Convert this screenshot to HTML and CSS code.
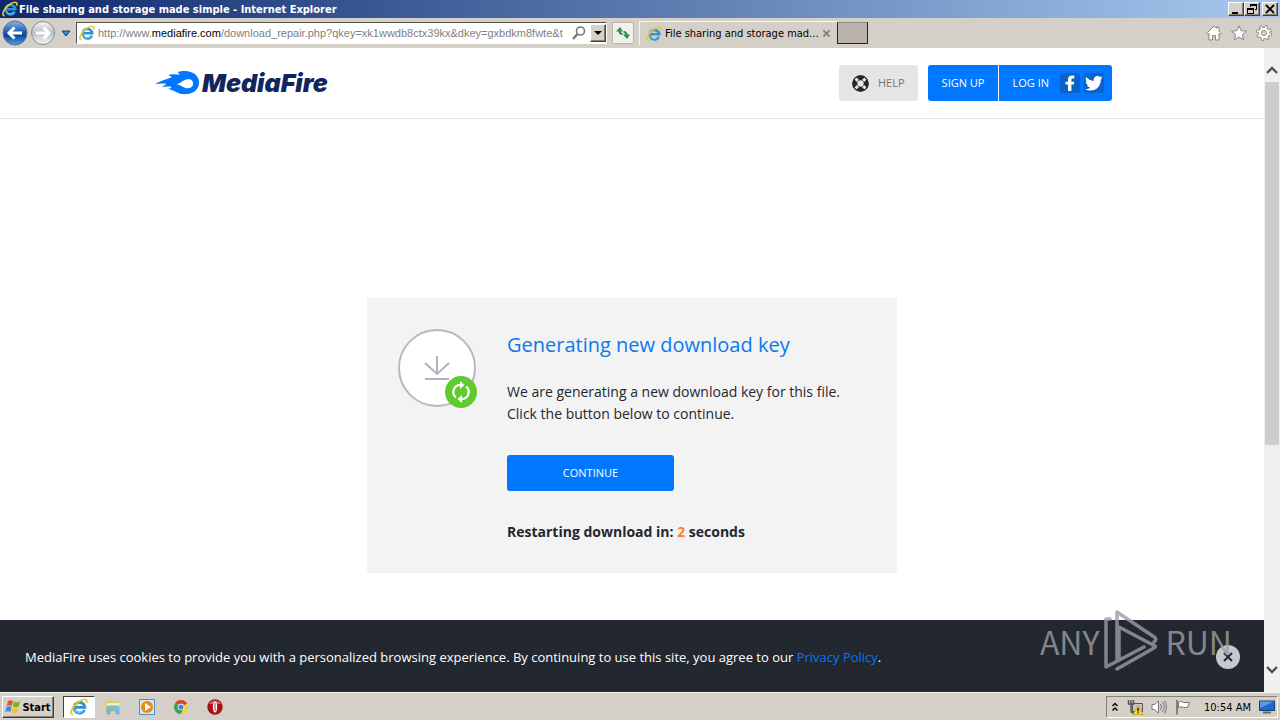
FILE: index.html
```html
<!DOCTYPE html>
<html lang="en">
<head>
<meta charset="utf-8">
<title>File sharing and storage made simple</title>
<link rel="stylesheet" href="styles.css">
</head>
<body>
<svg class="defs" aria-hidden="true">
  <symbol id="ie" viewBox="0 0 16 16">
    <path d="M12.800 10.600A4.800 4.800 0 1 1 13.200 8.300H5" fill="none" stroke="#2b93da" stroke-width="2.600"/>
    <path d="M12 10.800A4.600 4.600 0 0 1 4 10" fill="none" stroke="#7fd0f6" stroke-width="1"/>
    <path d="M2.600 14.800C-1.200 14.200 2 7.500 7 3.800 11.500 .3 16.200 .2 14.600 4.600" fill="none" stroke="#f2c62c" stroke-width="1.700"/>
  </symbol>
</svg>

<header class="titlebar">
  <svg class="icon16"><use href="#ie"/></svg>
  <span class="titlebar-text">File sharing and storage made simple - Internet Explorer</span>
  <div class="window-buttons">
    <button class="bevel" aria-label="Minimize"><svg viewBox="0 0 14 12"><path d="M3 9h6v2H3z"/></svg></button>
    <button class="bevel" aria-label="Restore"><svg viewBox="0 0 14 12"><path d="M5 1h7v6h-2V6h1V3H6v1H5zM2 5h7v6H2zm1 2v3h5V7z" fill-rule="evenodd"/></svg></button>
    <button class="bevel close" aria-label="Close"><svg viewBox="0 0 14 12"><path d="M3 2l8 8M11 2l-8 8" stroke="#000" stroke-width="1.800"/></svg></button>
  </div>
</header>

<nav class="toolbar">
  <div class="history">
    <button class="plain" aria-label="Back"><svg class="nav-icon" viewBox="0 0 26 26">
      <defs><linearGradient id="blue" x2="0" y2="1"><stop stop-color="#8db6e5"/><stop offset=".45" stop-color="#1d5db0"/><stop offset=".6" stop-color="#08479c"/><stop offset="1" stop-color="#4ba5e8"/></linearGradient></defs>
      <circle cx="13" cy="13" r="12" fill="url(#blue)" stroke="#5b6f8f"/><path d="M20 13H7M12.500 7.500L7 13l5.500 5.500" fill="none" stroke="#fff" stroke-width="3"/></svg></button>
    <button class="plain" aria-label="Forward"><svg class="nav-icon" viewBox="0 0 26 26">
      <defs><linearGradient id="grey" x2="0" y2="1"><stop stop-color="#f4f4f4"/><stop offset=".5" stop-color="#b8c0c8"/><stop offset="1" stop-color="#f4f8fb"/></linearGradient></defs>
      <circle cx="13" cy="13" r="11.500" fill="url(#grey)" stroke="#858c94"/><path d="M6 13h13M13.500 7.500L19 13l-5.500 5.500" fill="none" stroke="#fff" stroke-width="3"/></svg></button>
    <button class="plain recent" aria-label="Recent pages"><svg viewBox="0 0 10 7"><path d="M1 1h8L5 6z" fill="#2f8fd0" stroke="#123f78"/></svg></button>
  </div>
  <div class="address">
    <svg class="icon16"><use href="#ie"/></svg>
    <a class="url" href="#">http://www.<span class="domain">mediafire.com</span>/download_repair.php?qkey=xk1wwdb8ctx39kx&amp;dkey=gxbdkm8fwte&amp;t</a>
    <button class="plain" aria-label="Search"><svg class="icon16" viewBox="0 0 16 16"><circle cx="9.500" cy="6" r="4" fill="none" stroke="#777" stroke-width="1.600"/><path d="M6.500 9L2 14" stroke="#777" stroke-width="2.400"/></svg></button>
    <button class="bevel drop" aria-label="Show addresses"><svg viewBox="0 0 14 12"><path d="M3 4h8L7 8z"/></svg></button>
  </div>
  <button class="refresh" aria-label="Refresh"><svg class="icon16" viewBox="0 0 16 16"><path d="M1 6.500l4-4.500 3 4.500zM8 9.500h7L12 14z" fill="#259044"/><path d="M4.500 6q0 3 3 3M11.500 10q0-3-3-3" fill="none" stroke="#259044" stroke-width="2"/></svg></button>
  <div class="tab">
    <svg class="icon16"><use href="#ie"/></svg>
    <span class="tab-title">File sharing and storage mad...</span>
    <button class="plain" aria-label="Close tab"><svg class="tab-x" viewBox="0 0 10 10"><path d="M1.500 1.500l7 7M8.500 1.500l-7 7" stroke="#888178" stroke-width="2"/></svg></button>
  </div>
  <button class="new-tab" aria-label="New tab"></button>
  <div class="tools">
    <button class="plain" aria-label="Home"><svg class="icon16" viewBox="0 0 16 16"><path d="M8 1l2.500 2.500V2H13v4l2.500 2.500-1 1L13 8.500V15H9.500v-4.500h-3V15H3V8.500L1.500 9.500l-1-1z" fill="#fff" stroke="#858585"/></svg></button>
    <button class="plain" aria-label="Favorites"><svg class="icon16" viewBox="0 0 16 16"><path d="M8 .8l2.100 4.900 5.300.4-4 3.500 1.200 5.300L8 12.100l-4.600 2.800 1.200-5.300-4-3.500 5.300-.4z" fill="#fff" stroke="#858585"/></svg></button>
    <button class="plain" aria-label="Tools"><svg class="icon16" viewBox="0 0 16 16"><circle cx="8" cy="8" r="6.300" fill="none" stroke="#858585" stroke-width="3.400" stroke-dasharray="2.600 2.350"/><circle cx="8" cy="8" r="4.200" fill="none" stroke="#858585" stroke-width="4"/><circle cx="8" cy="8" r="6" fill="none" stroke="#fff" stroke-width="2.200" stroke-dasharray="1.600 3.110" stroke-dashoffset="-.5"/><circle cx="8" cy="8" r="4.100" fill="none" stroke="#fff" stroke-width="2.400"/></svg></button>
  </div>
</nav>

<div class="viewport">
  <div class="page">
    <header class="site-header">
      <a class="logo" href="#">
        <svg class="flame" viewBox="0 0 46 26"><path d="M0 14C5 10.500 12 9.500 17 7c-1-1.500-3-2-4-2C18 3 22 4.500 25 4.200c0-1.200-1-1.700-2-2C26-.2 43-1 45 11c1 10-9 15-19 13-5-1.500-8-4-13-5 2-.2 3-1 4-2-3-1-7 0-10 .4 2-1.400 3-2.700 5-3.400-4-1-8-.3-12 0z" fill="#07f"/><path d="M22 14c4 0 6-3.500 10-4.500 4-1 7 .5 7 4 0 4-4 5.500-8 4.500-3-.8-5-3-9-4z" fill="#fff"/></svg>
        <span>MediaFire</span>
      </a>
      <div class="account">
        <a class="btn help" href="#">
          <svg class="help-icon" viewBox="0 0 16 16"><circle cx="8" cy="8" r="5.300" fill="none" stroke="#262626" stroke-width="4.600"/><path d="M3 3l2.500 2.500M13 3l-2.500 2.500M3 13l2.500-2.500M13 13l-2.500-2.500" stroke="#e5e5e5" stroke-width="2.800"/><circle cx="8" cy="8" r="7.300" fill="none" stroke="#262626"/></svg>
          HELP</a>
        <div class="join">
          <a class="btn signup" href="#">SIGN UP</a>
          <a class="btn login" href="#">LOG IN
            <span class="socials">
              <svg class="social" viewBox="0 0 20 20"><rect width="20" height="20" rx="2" fill="#0862c8"/><path d="M8 18v-6.500H5.500V8.700H8V6.800C8 4 9.500 2.500 12 2.500h2.300v2.900H13c-1.300 0-1.600.5-1.600 1.600v1.700h2.900l-.4 2.800h-2.500V18z" fill="#fff"/></svg>
              <svg class="social" viewBox="0 0 20 20"><rect width="20" height="20" rx="2" fill="#0862c8"/><path d="M18.500 4.500l-1.700 2.200C16.800 13 12.500 17.500 7 17.500c-2.200 0-4.200-.6-5.800-1.600 2 .2 3.700-.4 5.100-1.500-1.600-.1-2.900-1.100-3.300-2.500h1.400C2.700 11.600 1.700 10.300 1.700 8.600l1.500.4C1.600 8 1.200 5.700 2.200 4c2 2.300 4.600 3.700 7.500 3.900C9.200 5.200 11 3 13.400 3c1.100 0 2 .4 2.700 1.100l2.200-.8-1.300 1.900z" fill="#fff"/></svg>
            </span>
          </a>
        </div>
      </div>
    </header>

    <main class="main">
      <section class="card">
        <svg class="status" viewBox="0 0 80 80">
          <circle cx="39" cy="39" r="38" fill="#fff" stroke="#b6b8c6" stroke-width="2"/>
          <path d="M39 27v18M27 34l12 11 12-11M27 50h24" fill="none" stroke="#b0b2be" stroke-width="2"/>
          <circle cx="63" cy="63" r="16" fill="#5fcb2e"/>
          <path d="M58 68.500A7 7 0 0 1 62.500 56M68 57.500A7 7 0 0 1 63.500 70" fill="none" stroke="#fff" stroke-width="2.200"/>
          <path d="M62 52l4.500 4-4.500 4zM64 74l-4.500-4 4.500-4z" fill="#fff"/>
        </svg>
        <div class="card-body">
          <h1>Generating new download key</h1>
          <p>We are generating a new download key for this file.<br>Click the button below to continue.</p>
          <button class="continue">CONTINUE</button>
          <p class="countdown">Restarting download in: <span>2</span> seconds</p>
        </div>
      </section>
    </main>

    <footer class="cookies">
      <p>MediaFire uses cookies to provide you with a personalized browsing experience. By continuing to use this site, you agree to our <a href="#">Privacy Policy</a>.</p>
      <button class="dismiss" aria-label="Dismiss"><svg viewBox="0 0 10 10"><path d="M1 1l8 8M9 1L1 9" stroke="#23272f" stroke-width="2"/></svg></button>
    </footer>
    <div class="watermark">
      <span>ANY</span>
      <svg viewBox="0 0 56 64"><path d="M13 50V3l38 25.500q2 2-1 4.500M6 10H2v48l38-20M13 50l2-1V18l36 19q1 1-1 2L13 60" fill="none" stroke="#9b9da1" stroke-width="3.500" stroke-linejoin="round" stroke-linecap="round"/></svg>
      <span>RUN</span>
    </div>
  </div>
  <div class="scrollbar" aria-hidden="true">
    <svg class="arrow" viewBox="0 0 12 8"><path d="M1 7l5-5 5 5" fill="none" stroke="#505050" stroke-width="2.400"/></svg>
    <div class="track"><div class="thumb"></div></div>
    <svg class="arrow" viewBox="0 0 12 8"><path d="M1 1l5 5 5-5" fill="none" stroke="#505050" stroke-width="2.400"/></svg>
  </div>
</div>

<footer class="taskbar">
  <button class="bevel start"><svg class="icon16" viewBox="0 0 16 16"><path d="M3 2q2.500-1.500 5 0L6.800 7q-2.500-1.300-5 0z" fill="#e8542b"/><path d="M9 2.400q2.500 1.500 6 0L13.700 7.500q-3 1.400-5.900 0z" fill="#76b52b"/><path d="M1.500 8q2.500-1.400 5 0l-1.200 5q-2.500-1.400-5 0z" fill="#3b8de0"/><path d="M7.500 8.500q3 1.400 6 0l-1.300 5q-3 1.400-5.900 0z" fill="#f6c32a"/></svg>Start</button>
  <button class="task active" aria-label="Internet Explorer"><svg class="icon18"><use href="#ie"/></svg></button>
  <button class="task" aria-label="Explorer"><svg class="icon16" viewBox="0 0 16 16"><path d="M1 3l2-1.500h4l1 1.500h6v10H1z" fill="#e2c860"/><path d="M2 4h12v4H2z" fill="#fbf0ab"/><path d="M2 15V9q0-2 2-2h8q2 0 2 2v6h-3v-4H5v4z" fill="#75c1e5" stroke="#4a98c0" stroke-width=".5"/></svg></button>
  <button class="task" aria-label="Media Player"><svg class="icon16" viewBox="0 0 16 16"><path d="M.5.500h15v15H.5z" fill="#d1e8fa" stroke="#4c91cb"/><circle cx="8" cy="8" r="6" fill="#f28614"/><path d="M6 4l6 4-6 4z" fill="#fff"/></svg></button>
  <button class="task" aria-label="Chrome"><svg class="icon14" viewBox="0 0 16 16"><circle cx="8" cy="8" r="8" fill="#f8cf36"/><path d="M8 8L1.200 3.800A8 8 0 0 1 15 4z" fill="#da4435"/><path d="M8 8L1.200 3.800A8 8 0 0 0 7.500 16l4-7z" fill="#35a354"/><circle cx="8" cy="8" r="3.800" fill="#fff"/><circle cx="8" cy="8" r="3" fill="#4384e6"/></svg></button>
  <button class="task" aria-label="Opera"><svg class="icon16" viewBox="0 0 16 16"><circle cx="8" cy="8" r="7.700" fill="#a90f18"/><path d="M2 5a7 7 0 0 1 12 0z" fill="#d56468"/><ellipse cx="8" cy="8" rx="2.200" ry="5.500" fill="#fff"/><path d="M8 4v8" stroke="#8e0912" stroke-width=".8"/></svg></button>
  <div class="tray">
    <button class="plain" aria-label="Show hidden icons"><svg class="chev" viewBox="0 0 8 10"><path d="M1.500 4L4 1.500 6.500 4M1.500 8.500L4 6l2.500 2.500" fill="none" stroke="#000" stroke-width="1.400"/></svg></button>
    <svg class="icon16" viewBox="0 0 16 16"><path d="M5.500 4.500h10v8h-10z" fill="#c3c3c3" stroke="#555"/><path d="M1.500 1v4h5V1M4 1v11q0 2 3 2" fill="none" stroke="#555" stroke-width="1.500"/><path d="M11 6.500l5 9H6z" fill="#ffda20" stroke="#b28b00" stroke-width=".6"/><path d="M11 9v3.500m0 .8v1" stroke="#000" stroke-width="1.300"/></svg>
    <svg class="icon16" viewBox="0 0 16 16"><path d="M1 5.500h2.500L7.500 2v12l-4-3.500H1z" fill="#fff" stroke="#777"/><path d="M9.500 5q2 3 0 6M11.500 3q3.500 5 0 10M13.500 1.500q4 6.500 0 13" fill="none" stroke="#777"/></svg>
    <svg class="icon16" viewBox="0 0 16 16"><path d="M3.500 3q3-1.500 5.500.5h5.500l-2 5H8.500Q6 7 3.500 8.500z" fill="#fff" stroke="#777"/><path d="M2 1v14.500" stroke="#777" stroke-width="1.800"/></svg>
    <time>10:54 AM</time>
    <svg class="icon16" viewBox="0 0 16 16"><path d="M.5 2h15v9.500H.5z" fill="#1d69cb" stroke="#173d76"/><path d="M1 2.500h14L1 9z" fill="#5799e5"/><path d="M4 13.500h8" stroke="#666" stroke-width="2"/></svg>
  </div>
</footer>
</body>
</html>
```
FILE: styles.css
```css
* { box-sizing: border-box; }
body {
  margin: 0;
  min-height: 100vh;
  display: flex;
  flex-direction: column;
  background: #fff;
  color: #23272f;
  font-family: "Open Sans", sans-serif;
}
.defs { position: absolute; width: 0; height: 0; }
button { margin: 0; padding: 0; font: inherit; color: inherit; }
a { text-decoration: none; color: inherit; }
p, h1 { margin: 0; }
svg { display: block; flex: none; }
.icon14 { width: 14px; height: 14px; }
.icon16 { width: 16px; height: 16px; }
.icon18 { width: 18px; height: 18px; }
.plain { border: 0; background: none; display: flex; align-items: center; }
.bevel {
  display: flex;
  align-items: center;
  justify-content: center;
  background: #d6d1c8;
  border: 1px solid;
  border-color: #fff #404040 #404040 #fff;
  box-shadow: inset -1px -1px #858078;
}

.titlebar, .toolbar, .taskbar { font-family: "DejaVu Sans Condensed", "DejaVu Sans", sans-serif; }
.titlebar {
  height: 18px;
  display: flex;
  align-items: center;
  padding: 0 2px;
  gap: 1px;
  background: linear-gradient(90deg, #0d286c, #a6caf0);
  color: #fff;
  font-size: 11px;
  font-weight: bold;
}
.titlebar-text { flex: 1; white-space: nowrap; }
.window-buttons { display: flex; }
.window-buttons .bevel { width: 16px; height: 14px; }
.window-buttons svg { width: 14px; height: 12px; }
.window-buttons .close { margin-left: 2px; }

.toolbar {
  height: 30px;
  display: flex;
  align-items: center;
  padding: 0 8px 0 2px;
  background: #d5d0c7;
  font-size: 11px;
  color: #000;
}
.history { display: flex; align-items: center; gap: 2px; width: 74px; }
.nav-icon { width: 26px; height: 26px; }
.recent { margin-left: 3px; }
.recent svg { width: 10px; height: 7px; }
.address {
  width: 531px;
  height: 22px;
  display: flex;
  align-items: center;
  gap: 3px;
  padding-left: 2px;
  background: #fff;
  border: 1px solid;
  border-color: #55514b #fff #fff #55514b;
}
.url {
  flex: 1;
  min-width: 0;
  overflow: hidden;
  white-space: nowrap;
  color: #808080;
  font-family: "Liberation Sans", Arial, sans-serif;
}
.domain { color: #000; }
.drop { width: 16px; height: 18px; }
.drop svg { width: 14px; height: 12px; }
.refresh {
  width: 22px;
  height: 22px;
  margin: 0 5px;
  display: grid;
  place-items: center;
  background: #f2f0ed;
  border: 1px solid #b9b5ae;
  border-radius: 2px;
}
.tab {
  width: 198px;
  height: 24px;
  display: flex;
  align-items: center;
  gap: 3px;
  padding: 0 6px;
  border: solid #f8f6f2;
  border-width: 1px 0 0 1px;
}
.tab-title { flex: 1; white-space: nowrap; }
.tab-x { width: 9px; height: 9px; }
.new-tab {
  width: 31px;
  height: 22px;
  background: #bbb4ae;
  border: 1px solid #222;
  border-top-color: #8a8681;
}
.tools { margin-left: auto; display: flex; gap: 9px; }

.viewport { flex: 1; display: flex; }
.page { flex: 1; min-width: 0; display: flex; flex-direction: column; position: relative; }
.site-header {
  height: 71px;
  display: flex;
  align-items: center;
  justify-content: space-between;
  padding: 0 152px 0 155px;
  border-bottom: 1px solid #e4e4e4;
}
.logo {
  display: flex;
  align-items: center;
  gap: 2px;
  color: #10265c;
  font: italic 900 25px/26px Inter, sans-serif;
}
.flame { width: 45px; height: 26px; }
.account { display: flex; gap: 10px; font-size: 11px; line-height: 14px; }
.btn {
  height: 36px;
  display: flex;
  align-items: center;
  padding: 0 13px;
  color: #fff;
  background: #07f;
}
.btn.help { gap: 9px; color: #777; background: #e5e5e5; border-radius: 3px; }
.help-icon { width: 17px; height: 17px; }
.join { display: flex; gap: 1px; border-radius: 3px; overflow: hidden; }
.signup { padding: 0 14px; }
.login { gap: 11px; padding-right: 8px; }
.socials { display: flex; gap: 4px; }
.social { width: 20px; height: 20px; }

.main { flex: 1; padding: 179px 16px 47px; display: flex; justify-content: center; align-items: flex-start; }
.card {
  width: 530px;
  display: flex;
  gap: 29px;
  padding: 31px 31px 30px;
  background: #f3f3f3;
}
.status { width: 80px; height: 80px; }
.card-body { font-size: 14px; line-height: 22px; }
h1 { font-size: 20px; line-height: 32px; font-weight: 400; color: #0c78ec; margin-bottom: 20px; }
.continue {
  display: block;
  width: 167px;
  height: 36px;
  margin: 30px 0;
  border: 0;
  border-radius: 3px;
  background: #07f;
  color: #fff;
  font-size: 11px;
}
.countdown { font-weight: 700; }
.countdown span { color: #ff7f32; }

.cookies {
  min-height: 72px;
  display: flex;
  align-items: center;
  justify-content: space-between;
  padding: 2px 24px 0 25px;
  background: #23272f;
  color: #fff;
  font-size: 13px;
}
.cookies a { color: #07f; }
.dismiss {
  width: 24px;
  height: 24px;
  display: grid;
  place-items: center;
  border: 0;
  border-radius: 50%;
  background: #c5c8cc;
}
.dismiss svg { width: 10px; height: 10px; }
.watermark {
  position: absolute;
  right: 32px;
  bottom: 19px;
  display: flex;
  align-items: center;
  gap: 5px;
  color: #9b9da1;
  font: 32px/64px "Noto Sans CJK SC", sans-serif;
  opacity: .8;
  pointer-events: none;
}
.watermark svg { width: 56px; height: 64px; }
.scrollbar {
  width: 16px;
  display: flex;
  flex-direction: column;
  align-items: center;
  gap: 8px;
  padding: 18px 0;
  background: #f0f0f0;
}
.arrow { width: 12px; height: 8px; }
.track { flex: 1; align-self: stretch; padding: 0 1px; }
.thumb { height: 63%; background: #cdcdcd; }

.taskbar {
  height: 28px;
  display: flex;
  align-items: center;
  gap: 2px;
  padding: 1px 2px 0;
  background: #d5d0c7;
  border-top: 1px solid #f7f5f0;
  font-size: 11px;
  color: #000;
}
.start { width: 52px; height: 22px; gap: 1px; font-weight: bold; margin-right: 7px; }
.task { width: 32px; height: 22px; display: grid; place-items: center; border: 0; background: none; }
.active { background: #fff; border: 1px solid; border-color: #404040 #fff #fff #404040; }
.tray {
  margin-left: auto;
  height: 22px;
  display: flex;
  align-items: center;
  gap: 8px;
  padding: 0 2px 0 4px;
  border: 1px solid;
  border-color: #858078 #fff #fff #858078;
}
.tray time { margin-left: 5px; }
.chev { width: 8px; height: 10px; }
```
